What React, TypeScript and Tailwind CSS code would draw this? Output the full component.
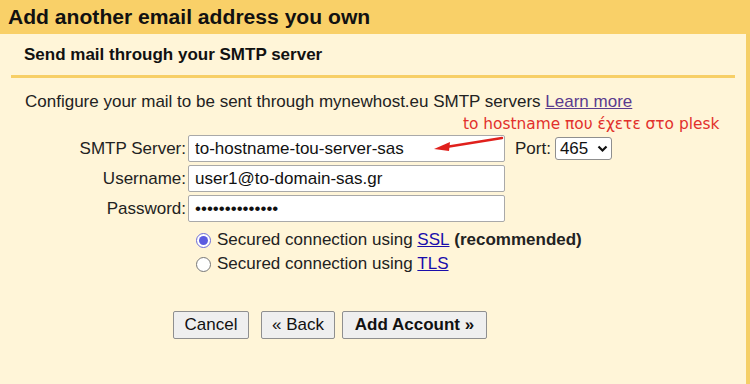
import React from 'react';

const font = { fontFamily: '"Liberation Sans", Arial, sans-serif' };

const Field: React.FC<{ label: string; value: string; type?: string; children?: React.ReactNode }> = ({
  label,
  value,
  type = 'text',
  children,
}) => (
  <div className="flex items-center h-[27px] mb-[3px]">
    <label className="w-[175px] text-right text-[17px] text-[#222]">{label}</label>
    <input
      readOnly
      type={type}
      value={value}
      className="ml-[2px] w-[317px] h-[27px] px-[6px] bg-white border border-[#a9a9a9] rounded-[2px] text-[17px] text-[#111] outline-none"
    />
    {children}
  </div>
);

const Button: React.FC<{ children: React.ReactNode; bold?: boolean; w: string }> = ({ children, bold, w }) => (
  <button
    className={`h-[28px] ${w} bg-[#efefef] border border-[#8f8f8f] rounded-[2px] text-[17px] text-[#111] ${bold ? 'font-bold' : ''}`}
  >
    {children}
  </button>
);

export default function App() {
  return (
    <div className="w-[750px] h-[384px] overflow-hidden bg-[#fff5d8]" style={font}>
      <div className="h-[34px] bg-[#f9d068] flex items-center px-[8px]">
        <h1 className="text-[21.1px] font-bold text-[#111] leading-none">Add another email address you own</h1>
      </div>

      <div className="h-[350px] border-r-[4px] border-[#f5cf68] pl-[11px] pr-[11px]">
        <div className="h-[44px] flex items-center pl-[13px] pt-[1px] border-b-[3px] border-[#f7cf66]">
          <h2 className="text-[17px] font-bold text-[#111]">Send mail through your SMTP server</h2>
        </div>

        <div className="pl-[14px] pt-[14px] text-[17px] leading-[20px] text-[#222]">
          Configure your mail to be sent through mynewhost.eu SMTP servers{' '}
          <a className="text-[#5a3b8e] underline">Learn more</a>
        </div>

        <div
          className="pl-[452px] pt-[2px] text-[15.4px] leading-[20px] text-[#e2302c]"
          style={{ fontFamily: '"DejaVu Sans", sans-serif' }}
        >
          to hostname που έχετε στο plesk
        </div>

        <div className="relative mt-[1px]">
          <Field label="SMTP Server:" value="to-hostname-tou-server-sas">
            <span className="ml-[10px] text-[17px] text-[#222]">Port:</span>
            <div className="ml-[4px] h-[23px] w-[57px] flex items-center justify-between pl-[4px] pr-[3px] bg-white border border-[#8f8f8f] rounded-[3px] text-[17px] text-[#111]">
              <span>465</span>
              <svg width="11" height="8" viewBox="0 0 11 8">
                <path d="M1.5 1.5 L5.5 5.5 L9.5 1.5" fill="none" stroke="#111" strokeWidth="2.2" />
              </svg>
            </div>
          </Field>
          <Field label="Username:" value="user1@to-domain-sas.gr" />
          <Field label="Password:" value="oooooooooooooo" type="password" />

          <svg className="absolute left-[399px] top-[0px]" width="100" height="20" viewBox="0 0 100 20">
            <line x1="92" y1="3" x2="36" y2="12" stroke="#e0201c" strokeWidth="2.5" strokeLinecap="round" />
            <path d="M24 14 L40 7 L39 16 Z" fill="#e0201c" />
          </svg>
        </div>

        <div className="pl-[185px] pt-[3px] text-[17px] text-[#222]">
          <label className="flex items-center h-[24px]">
            <span className="w-[15px] h-[15px] mr-[6px] rounded-full border border-[#6b6bd6] bg-white flex items-center justify-center">
              <span className="w-[9px] h-[9px] rounded-full bg-[#5b5be0]" />
            </span>
            Secured connection using&nbsp;<a className="text-[#1a0dab] underline">SSL</a>&nbsp;
            <b>(recommended)</b>
          </label>
          <label className="flex items-center h-[24px]">
            <span className="w-[15px] h-[15px] mr-[6px] rounded-full border border-[#777] bg-white" />
            Secured connection using&nbsp;<a className="text-[#1a0dab] underline">TLS</a>
          </label>
        </div>

        <div className="flex gap-[12px] pl-[162px] pt-[35px]">
          <Button w="w-[76px]">Cancel</Button>
          <div className="flex gap-[7px]">
            <Button w="w-[74px]">« Back</Button>
            <Button w="w-[145px]" bold>
              Add Account »
            </Button>
          </div>
        </div>
      </div>
    </div>
  );
}
